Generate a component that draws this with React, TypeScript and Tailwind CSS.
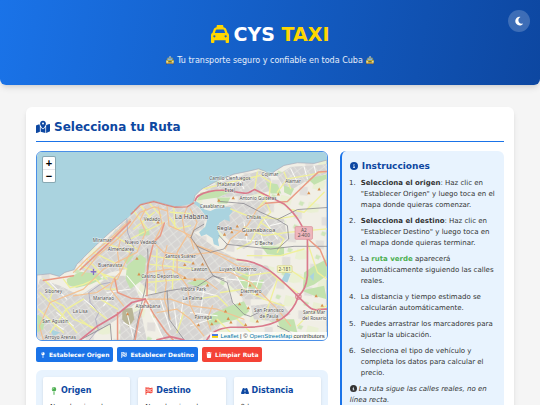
import React from "react"
import {
  FaTaxi,
  FaMoon,
  FaMapLocationDot,
  FaCircleInfo,
  FaMapPin,
  FaFlagCheckered,
  FaTrash,
  FaRoad,
} from "react-icons/fa6"

interface Place {
  name: string
  x: number
  y: number
  size?: number
}

const places: Place[] = [
  { name: "La Habana", x: 483, y: 261, size: 20 },
  { name: "Vedado", x: 365, y: 266 },
  { name: "Miramar", x: 216, y: 329 },
  { name: "Nuevo Vedado", x: 331, y: 334 },
  { name: "Camilo Cienfuegos", x: 598, y: 143 },
  { name: "(Habana del", x: 598, y: 161 },
  { name: "Este)", x: 598, y: 179 },
  { name: "Cojimar", x: 718, y: 133 },
  { name: "Alamar", x: 787, y: 153 },
  { name: "Antonio Guiteras", x: 682, y: 203 },
  { name: "Casablanca", x: 545, y: 228 },
  { name: "Chibás", x: 669, y: 261 },
  { name: "Regla", x: 582, y: 293, size: 17 },
  { name: "Guanabacoa", x: 684, y: 299, size: 17 },
  { name: "D'Beche", x: 700, y: 339 },
  { name: "Almendares", x: 272, y: 357 },
  { name: "Buenavista", x: 240, y: 403 },
  { name: "Santos Suárez", x: 450, y: 377 },
  { name: "Casino Deportivo", x: 389, y: 436 },
  { name: "Siboney", x: 70, y: 482 },
  { name: "Marianao", x: 220, y: 504 },
  { name: "Altahabana", x: 353, y: 527 },
  { name: "La Lisa", x: 150, y: 540 },
  { name: "San Agustín", x: 76, y: 570 },
  { name: "Arroyo Arenas", x: 91, y: 619 },
  { name: "Lawton", x: 507, y: 415 },
  { name: "Luyanó Moderno", x: 622, y: 416 },
  { name: "Víbora Park", x: 489, y: 475 },
  { name: "La Palma", x: 486, y: 504 },
  { name: "Diezmero", x: 661, y: 482 },
  { name: "Párraga", x: 518, y: 558 },
  { name: "San Francisco", x: 715, y: 538 },
  { name: "de Paula", x: 715, y: 556 },
  { name: "Santa Mar", x: 850, y: 544 },
  { name: "del Rosario", x: 851, y: 562 },
]

const land =
  "M21 428L60 424 88 432 104 420 132 412 140 396 196 340 240 300 290 258 298 266 303 243 330 216 370 206 405 216 432 223 470 222 488 210 494 190 512 172 560 146 610 126 650 118 684 110 704 118 716 130 734 116 760 100 800 92 850 94 888 84V624H21z"

const bay =
  "M494 206L508 214 522 232 540 236 562 226 600 224 606 238 596 250 598 268 582 262 566 272 560 292 568 310 562 322 566 342 550 336 546 318 528 306 512 312 506 300 524 284 530 264 522 246 506 226 490 214z"

const suburbs = [
  "M300 250L330 218 370 208 432 226 492 212 524 250 520 290 490 300 560 350 620 380 600 430 540 440 470 470 380 480 350 470 290 410 240 420 200 440 150 410 200 350z",
  "M30 440L90 460 150 490 240 430 300 430 330 500 260 560 200 600 150 624H21V470z",
  "M350 490L470 460 540 430 590 470 610 520 560 590 500 624H400L370 540z",
  "M556 230L600 218 690 200 720 220 700 250 760 260 770 320 730 340 690 320 640 350 600 330 560 290z",
  "M520 168L600 140 690 116 720 140 722 176 660 190 560 196z",
  "M738 130L780 104 850 100 888 96V124L820 150 770 180z",
  "M580 390L640 390 710 400 740 440 700 500 640 500 590 450z",
  "M660 520L750 510 780 545 730 566 670 560z",
  "M270 560L330 530 350 624H270z",
]

const parks = [
  "M325 292L355 288 358 308 326 312z",
  "M510 182L560 172 600 180 560 196 500 205z",
  "M110 440L150 418 200 424 216 440 180 456 140 466 112 458z",
  "M290 400L330 366 348 380 340 440 300 470 286 440z",
  "M280 384L306 360 310 372 290 396z",
  "M706 150L740 156 752 184 720 184z",
  "M560 196L600 196 590 214 562 214z",
  "M820 420L850 400 888 380V430L850 456 816 470z",
  "M812 474L880 460 888 500 850 490z",
  "M640 506L600 520 520 556 540 580 620 560 656 536z",
  "M760 160L790 170 780 190 760 180z",
  "M830 140L888 126V140L850 158z",
  "M620 436L650 420 664 452 700 440 690 470 640 466z",
  "M740 560L790 560 800 600 750 590z",
  "M470 452L510 440 540 452 500 464z",
  "M22 546L44 560 40 590 22 600z",
  "M690 340L760 344 760 370 710 366z",
]

const mainRoads = [
  "M130 420L170 380 250 310 300 262",
  "M155 430L200 372 262 320 296 286 330 240 372 224 410 236",
  "M410 222L416 280 460 300 480 310",
  "M470 226L456 260 462 300 500 340 620 382",
  "M480 230L500 270 480 316 490 350",
  "M346 230L330 262 346 300 320 360 260 390 220 410 160 470 60 510 28 580 40 622",
  "M384 224L396 280 370 330 400 360 460 370 540 360",
  "M270 324L262 360 270 420 250 440 240 470 280 520",
  "M300 360L280 400 262 440 200 480 130 490",
  "M410 340L396 400 408 450 402 500 420 560",
  "M350 420L420 410 470 440 520 440 560 470",
  "M470 310L440 360 440 420 470 460 480 520 500 560",
  "M490 330L520 380 540 420 600 420 660 450 740 530 780 580",
  "M500 340L560 366 620 400 660 404",
  "M584 350L600 320 650 280 680 230 705 213",
  "M350 500L420 500 480 520 560 530 640 560",
  "M380 540L440 530 480 560 520 610",
  "M546 520L530 560 540 590",
  "M600 290L640 300 700 290",
]

const minorRoads = [
  "M150 400L260 440M170 380L230 440M190 360L290 410M220 330L300 360M250 310L320 350",
  "M310 236L350 290M330 220L372 270M356 212L392 250M310 290L372 240M300 320L400 270",
  "M420 240L480 244M418 256L440 290 480 280M430 226L434 290",
  "M40 440L70 470 60 500 100 520 130 560 200 590",
  "M30 480L90 540 140 600M60 600L110 530 160 500M26 530L100 600",
  "M100 440L120 466 160 456 196 440 226 470 260 470",
  "M210 500L262 530M180 520L230 560M150 560L190 590",
  "M360 370L480 390M360 396L500 410M380 350L376 480M430 370L426 470M350 450L460 440",
  "M520 170L600 150 690 130 720 150 716 190 680 230M680 120L672 172 700 190",
  "M700 196L720 240 690 270 660 330 620 350M600 230L650 250 740 260 800 250",
  "M640 284L700 310 770 300 888 290M690 270L760 320 740 360",
  "M600 410L650 430 720 420 740 440 800 480",
  "M570 480L640 470 700 500 760 520M500 500L560 490 590 520",
  "M650 370L750 370 820 350M760 400L820 440M740 440L700 560",
  "M800 580L840 540 888 520M760 600L820 624M700 624L740 600 800 612",
  "M740 180L770 140 830 130 888 118M760 120L780 170",
  "M460 540L440 600M560 560L600 600M620 560L660 600",
  "M830 330L860 420 888 440M770 230L820 240 880 180",
]

const streets = [
  "M480 470L560 490M460 490L450 560M520 470L510 540M430 510L440 590M480 540L560 550M480 580L540 560",
  "M290 430L340 490M230 480L300 470M220 520L250 480M160 500L210 540M60 450L110 500M80 540L130 580M50 560L100 590",
  "M610 320L680 326M640 270L650 330M700 260L740 320M720 280L760 270M690 300L700 340",
  "M560 160L610 150M620 130L640 170M780 110L800 150M820 104L830 140M850 102L856 126",
  "M600 400L640 470M660 400L650 480M690 420L670 490M590 440L700 450",
  "M390 500L420 590M360 540L400 620M280 570L330 600M290 540L310 620",
]

const railways = [
  "M352 350L354 400 344 470 330 530 310 624",
  "M345 490L420 474 500 462 548 430 580 440",
  "M482 316L500 342 540 360 580 350 590 336 720 350 790 342 888 342",
  "M500 342L520 380 536 410 548 430 590 450 606 510 640 545 660 552 684 540",
  "M570 208L640 214 690 240 740 262 800 232 888 226",
  "M520 276L490 294 482 316M566 310L590 336",
  "M740 262L770 280 774 320 740 350",
  "M410 474L416 560 460 620",
  "M150 622L240 574 244 622M740 580L780 600 790 622",
]

const trunkRoads = [
  "M888 118L862 120 820 160 770 208 705 213",
  "M345 500L370 545 408 600 430 624",
  "M345 504L326 560 314 624",
  "M345 500L302 497 262 480 254 440",
  "M262 540V624",
  "M402 272L390 310 370 330 352 400 350 490",
  "M40 444L130 430",
  "M832 320L868 352 888 400",
  "M150 412L240 328 300 268",
]

const motorways = [
  "M620 382C700 386 740 430 800 490S840 528 888 530",
  "M494 205C500 180 560 168 610 178S650 182 672 172L760 215C800 250 816 280 830 322L830 430C826 470 812 480 803 492C780 560 720 584 650 584H600C560 588 540 600 528 624",
  "M150 622L200 582 262 545 305 510 345 500",
  "M380 622L420 612 460 622",
]

const peaks = [
  [383, 270], [565, 205], [608, 197], [743, 186], [834, 182], [865, 171], [582, 306], [604, 299],
  [620, 282], [647, 306], [320, 378], [326, 425], [463, 397], [463, 436], [488, 392], [516, 395],
  [493, 442], [531, 458], [658, 458], [632, 486], [627, 514], [653, 526], [680, 484], [856, 490],
  [292, 544], [504, 577], [544, 574], [556, 565], [585, 536], [593, 558], [601, 569], [680, 566],
  [645, 576], [740, 560], [874, 519],
]

function HavanaMap() {
  return (
    <svg
      viewBox="21 59 867 564"
      preserveAspectRatio="xMidYMid slice"
      className="block h-full w-full bg-[#aad3df]"
      role="img"
      aria-label="Mapa de La Habana"
    >
      <defs>
        <pattern id="blocks" width="24" height="20" patternUnits="userSpaceOnUse" patternTransform="rotate(-38)">
          <rect width="24" height="20" fill="#d6d4d2" />
          <path d="M0 4h24M6 0v20" stroke="#e8e7e2" strokeWidth="2" />
        </pattern>
        <pattern id="fields" width="86" height="72" patternUnits="userSpaceOnUse" patternTransform="rotate(14)">
          <rect width="86" height="72" fill="#f1efe6" />
          <path d="M0 0h34v24l-20 8H0z" fill="#eaf0d4" />
          <path d="M48 36l24-6 6 26-24 4z" fill="#e2dfdb" />
          <path d="M60 4l14 2-4 12-12-2z" fill="#cfe6ba" />
        </pattern>
      </defs>

      <path d={land} fill="url(#fields)" stroke="#a9a9b8" strokeWidth="2" />
      {suburbs.map((d) => (
        <path key={d} d={d} fill="url(#blocks)" />
      ))}
      {parks.map((d) => (
        <path key={d} d={d} fill="#c3e2ae" />
      ))}
      <path d="M276 530L306 526 312 560 296 584 276 560z" fill="#b9b597" />
      <path d={bay} fill="#aad3df" />
      <path d="M752 444L764 420 780 424 770 450zM836 432L850 420 848 446zM60 590L90 600 70 612z" fill="#aad3df" />

      <g fill="none" strokeLinejoin="round" strokeLinecap="round">
        {streets.map((d) => (
          <path key={d} d={d} stroke="#fbfbf8" strokeWidth="3" />
        ))}
        {minorRoads.map((d) => (
          <path key={d} d={d} stroke="#f0f09c" strokeWidth="4" />
        ))}
        {mainRoads.map((d) => (
          <path key={d} d={d} stroke="#f3c293" strokeWidth="3.5" />
        ))}
        <path
          d="M176 624L204 590 196 560 206 540 180 510 176 480 210 456 240 450M290 262L292 300 312 350 300 366"
          stroke="#a9a8bf"
          strokeWidth="2.5"
        />
        {railways.map((d) => (
          <path key={d} d={d} stroke="#83828a" strokeWidth="2.2" />
        ))}
        {trunkRoads.map((d) => (
          <path key={d} d={d} stroke="#e99a84" strokeWidth="4.5" />
        ))}
        {motorways.map((d) => (
          <path key={d} d={d} stroke="#da7a8c" strokeWidth="5" />
        ))}
        <path d="M303 245L330 218 370 208 405 218 432 225 470 224 490 212" stroke="#d98a80" strokeWidth="4" />
        <circle cx="803" cy="492" r="8" stroke="#da7a8c" strokeWidth="3" />
        <path d="M190 411v15M183 418h14" stroke="#8470c4" strokeWidth="4" />
      </g>

      {peaks.map(([x, y]) => (
        <path key={`${x}-${y}`} d={`M${x} ${y - 5}l5 9h-10z`} fill="#d6904f" />
      ))}

      <rect x="793" y="283" width="52" height="38" rx="3" fill="#efb6bc" stroke="#d68c98" strokeWidth="2" />
      <rect x="740" y="400" width="44" height="20" rx="2" fill="#f6f7c2" stroke="#cfce86" strokeWidth="2" />
      <g fontFamily="'Noto Sans', sans-serif" fontSize="14" textAnchor="middle" fill="#505050">
        <text x="819" y="300">A2</text>
        <text x="819" y="315">2-400</text>
        <text x="762" y="415">2-181</text>
        {places.map((p) => (
          <text
            key={p.name}
            x={p.x}
            y={p.y}
            fontSize={p.size ?? 14}
            stroke="#fff"
            strokeOpacity="0.6"
            strokeWidth="3"
            paintOrder="stroke"
          >
            {p.name}
          </text>
        ))}
      </g>
    </svg>
  )
}

function MapPanel() {
  return (
    <div className="relative h-[190px] overflow-hidden rounded-md border border-[#4a8fe7]">
      <HavanaMap />
      <div className="absolute top-1 left-[5px] flex w-[14px] flex-col overflow-hidden rounded-xs border border-black/20 bg-white bg-clip-padding font-['Liberation_Sans',sans-serif] text-[11px] leading-3 font-bold text-black">
        <button aria-label="Acercar" className="h-[13px] border-b border-gray-200">
          +
        </button>
        <button aria-label="Alejar" className="h-3">
          −
        </button>
      </div>
      <div className="absolute right-0 bottom-0 flex items-center gap-[2px] bg-white/80 px-[2px] font-['Liberation_Sans',sans-serif] text-[6px] leading-2 text-[#333]">
        <svg viewBox="0 0 12 8" className="h-1 w-[6px]" aria-hidden="true">
          <path fill="#4C7BE1" d="M0 0h12v4H0z" />
          <path fill="#FFD500" d="M0 4h12v3H0z" />
          <path fill="#E0BC00" d="M0 7h12v1H0z" />
        </svg>
        <span>
          <a href="#leaflet" className="text-[#0078a8]">Leaflet</a> | ©{" "}
          <a href="#osm" className="text-[#0078a8]">OpenStreetMap</a> contributors
        </span>
      </div>
    </div>
  )
}

const actions = [
  { label: "Establecer Origen", icon: FaMapPin, color: "bg-[#1a73e8]" },
  { label: "Establecer Destino", icon: FaFlagCheckered, color: "bg-[#1a73e8]" },
  { label: "Limpiar Ruta", icon: FaTrash, color: "bg-[#f44336]" },
]

const details = [
  { title: "Origen", value: "No seleccionado", icon: FaMapPin, color: "text-[#4caf50]" },
  { title: "Destino", value: "No seleccionado", icon: FaFlagCheckered, color: "text-[#f44336]" },
  { title: "Distancia", value: "0 km", icon: FaRoad, color: "text-[#0d47a1]" },
]

function Instructions() {
  return (
    <aside className="rounded-md border-l-2 border-[#1a73e8] bg-[#e8f3fe] px-2 pt-2 pb-4">
      <h3 className="mb-[5px] flex items-center gap-1 text-[9px] leading-[14px] font-bold text-[#0d47a1]">
        <FaCircleInfo className="size-2" />
        Instrucciones
      </h3>
      <ol className="flex list-decimal flex-col gap-[5px] pl-2 text-[7px] leading-[11px] *:pl-[3px]">
        <li>
          <strong>Selecciona el origen</strong>: Haz clic en "Establecer Origen" y luego toca en el mapa donde quieras
          comenzar.
        </li>
        <li>
          <strong>Selecciona el destino</strong>: Haz clic en "Establecer Destino" y luego toca en el mapa donde quieras
          terminar.
        </li>
        <li>
          La <strong className="text-[#4caf50]">ruta verde</strong> aparecerá automáticamente siguiendo las calles
          reales.
        </li>
        <li>La distancia y tiempo estimado se calcularán automáticamente.</li>
        <li>Puedes arrastrar los marcadores para ajustar la ubicación.</li>
        <li>Selecciona el tipo de vehículo y completa los datos para calcular el precio.</li>
      </ol>
      <p className="mt-[5px] text-[7px] leading-[11px] italic">
        <FaCircleInfo className="mr-[2px] inline-block size-[7px] align-[-1px]" />
        La ruta sigue las calles reales, no en línea recta.
      </p>
    </aside>
  )
}

export default function App() {
  return (
    <div className="min-h-screen bg-[#f5f5f5] font-['DejaVu_Sans',sans-serif] text-[#333]">
      <header className="relative rounded-b-md bg-[linear-gradient(100deg,#1a73e8,#0d47a1)] px-4 pt-[22px] pb-[18px] text-center shadow-md">
        <h1 className="flex items-center justify-center gap-[5px] text-[19px] leading-6 font-bold text-white">
          <FaTaxi className="size-[18px] text-[#ffd600]" />
          <span>
            CYS <span className="text-[#ffd600]">TAXI</span>
          </span>
        </h1>
        <p className="mt-2 text-[8px] leading-[13px] text-white/90">
          🚖 Tu transporte seguro y confiable en toda Cuba 🚖
        </p>
        <button
          aria-label="Cambiar tema"
          className="absolute top-[10px] right-[10px] flex size-[22px] items-center justify-center rounded-full bg-white/20 text-white"
        >
          <FaMoon className="size-[10px]" />
        </button>
      </header>

      <main className="px-[26px] pt-[22px]">
        <section className="rounded-md bg-white px-[10px] pt-3 pb-4 shadow-md">
          <h2 className="mb-[9px] flex items-center gap-1 border-b border-b-[#1a73e8] pb-[6px] text-[12px] leading-4 font-bold text-[#0d47a1]">
            <FaMapLocationDot className="size-[14px]" />
            Selecciona tu Ruta
          </h2>

          <div className="grid grid-cols-[16fr_9fr] gap-3">
            <div>
              <MapPanel />

              <div className="mt-[6px] flex gap-1">
                {actions.map(({ label, icon: Icon, color }) => (
                  <button
                    key={label}
                    className={`flex h-[15px] items-center gap-[3px] rounded-xs px-1 text-[6px] font-bold whitespace-nowrap text-white ${color}`}
                  >
                    <Icon className="h-[6px] w-auto" />
                    {label}
                  </button>
                ))}
              </div>

              <div className="mt-2 grid grid-cols-3 gap-2 rounded-md bg-[#e8f3fe] p-[7px]">
                {details.map(({ title, value, icon: Icon, color }) => (
                  <div key={title} className="rounded-xs bg-white p-[7px] shadow-sm">
                    <h4 className="mb-1 flex items-center gap-[3px] text-[8px] leading-[14px] font-bold text-[#0d47a1]">
                      <Icon className={`h-2 w-auto ${color}`} />
                      {title}
                    </h4>
                    <p className="text-[7px] leading-[11px]">{value}</p>
                  </div>
                ))}
              </div>
            </div>

            <Instructions />
          </div>
        </section>
      </main>
    </div>
  )
}
